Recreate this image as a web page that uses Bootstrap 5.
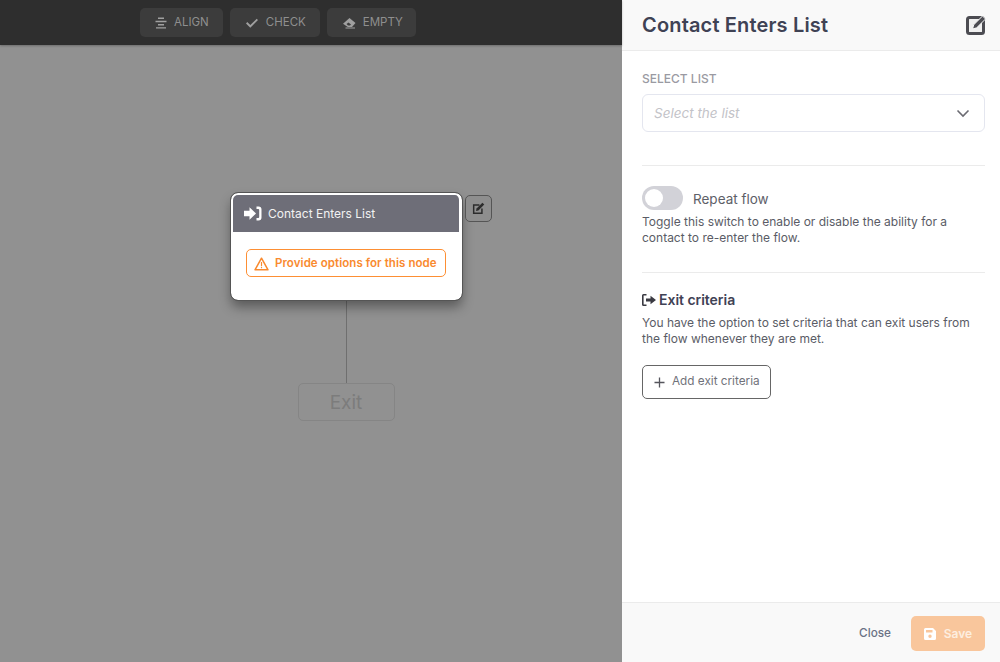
<!DOCTYPE html>
<html lang="en">
<head>
<meta charset="utf-8">
<title>Flow editor</title>
<link href="https://cdn.jsdelivr.net/npm/bootstrap@5.3.0/dist/css/bootstrap.min.css" rel="stylesheet">
<style>
html,body{height:100%;margin:0;overflow:hidden}
body{font-family:Inter,"Liberation Sans",sans-serif;background:#919191;color:#3f4254}
.shell{width:1000px;height:662px}
.stage{width:622px;height:662px;position:relative;background:#919191}
.topbar{height:45px;background:#2e2e2e;padding:8px 0 0 140px;gap:7px;box-shadow:0 1px 2px rgba(0,0,0,.25)}
.tool{height:29px;padding:0 14px 0 15px;gap:7px;background:#3c3c3c;border-radius:5px;color:#8f8f8f;font-size:11.5px}
.tool svg{width:12px;height:12px;fill:#a0a0a0;flex:none}
.tool svg.wideicon{width:14px}
.tool.narrowend{padding-right:13px}
.flownode{position:absolute;left:231px;top:193px;width:231px;height:107px;background:#fff;border:2px solid #fff;border-right-width:3px;outline:1px solid #555;border-radius:7px;box-shadow:0 7px 12px rgba(0,0,0,.38);overflow:hidden}
.nodehead{height:37px;background:#6e6e78;color:#f2f2f2;font-size:12px;font-weight:400;padding-left:11px;gap:6px}
.nodehead svg{width:18px;height:15px;fill:#fff}
.warnbox{margin:17px 13px 0 13px;height:28px;padding-top:1px;border:1px solid #fd8f34;border-radius:5px;color:#f98a2f;font-size:11.5px;font-weight:600;letter-spacing:.07px;padding-left:7px;gap:6px;white-space:nowrap}
.warnbox svg{width:15px;height:14px;flex:none}
.nodeedit{position:absolute;left:465px;top:195px;width:27px;height:27px;border:1px solid #555;border-radius:5px;background:#8e8e8e}
.nodeedit svg{width:13px;height:13px;fill:#2c2c2c}
.wire{position:absolute;left:346px;top:300px;width:1px;height:83px;background:#6f6f6f}
.exitnode{position:absolute;left:298px;top:383px;width:97px;height:38px;padding:2px 1px 0 0;border:1px solid #858585;border-radius:5px;color:#7c7c7c;font-size:19px}
.sidepanel{width:378px;height:662px;background:#fff}
.panelhead{height:51px;background:#f9f9f9;border-bottom:1px solid #ebebeb;padding:0 14px 0 20px}
.panelhead h1{font-size:20px;font-weight:600;letter-spacing:.16px;margin:0;color:#3f4254;line-height:1}
.panelhead svg{width:20px;height:20px}
.panelbody{padding:21px 15px 0 20px}
.fieldlabel{font-size:12px;font-weight:500;color:#9a9aa2;line-height:14px;margin-bottom:8px}
.fakeselect{height:38px;border:1px solid #e4e6ef;border-radius:6px;padding:0 14px 0 11px;font-size:13.5px;font-style:italic;color:#c3c3c8}
.fakeselect svg{width:14px;height:9px}
.rule{height:1px;background:#ebebeb}
.ruleone{margin-top:33px}
.ruletwo{margin-top:26px}
.switchpill{width:41px;height:24px;border-radius:12px;background:#d2d2d8;position:relative;flex:none}
.switchpill::after{content:"";position:absolute;left:3px;top:3px;width:18px;height:18px;border-radius:50%;background:#fff}
.switchrow{gap:10px;font-size:13.5px;color:#5e6068;height:24px;margin-top:20px}
.switchrow span:last-child{padding-top:2px}
.helptext{font-size:12px;line-height:16px;color:#5a5c66;margin:4px 0 0}
.exithead{font-size:14px;font-weight:600;letter-spacing:-.03px;color:#3f4254;line-height:17px;margin-top:18px;gap:3px}
.exithead svg{width:14px;height:12px;fill:#3a3a42}
.exithead + .helptext{margin-top:7px}
.addbtn{height:34px;width:129px;border:1px solid #666;border-radius:5px;background:#fff;color:#70727a;font-size:11.75px;gap:7px;margin-top:18px;padding:0 0 0 11px}
.addbtn svg{width:11px;height:11px}
.panelfoot{height:60px;background:#f9f9f9;border-top:1px solid #ebebeb;padding:2px 15px 0 0;gap:20px}
.closelink{font-size:11.75px;font-weight:500;color:#6b7285}
.savebtn{width:74px;height:35px;background:#f9c69c;border:0;border-radius:5px;color:#fdeee0;font-size:12px;font-weight:600;gap:8px}
.savebtn svg{width:12px;height:12px;fill:#fff}
</style>
</head>
<body>
<div class="shell d-flex">
  <main class="stage">
    <div class="topbar d-flex align-items-start">
      <div class="tool d-flex align-items-center">
        <svg viewBox="0 0 12 12"><path d="M3 .6h6V2H3zM.5 3.800h11v1.400H.5zM3 7h6v1.400H3zM1 10.200h10v1.400H1z"/></svg>ALIGN</div>
      <div class="tool d-flex align-items-center">
        <svg class="wideicon" viewBox="0 0 14 12"><path d="M1 6.400l1.300-1.300 3 3L11.700 1.700 13 3 5.300 10.700z"/></svg>CHECK</div>
      <div class="tool narrowend d-flex align-items-center">
        <svg class="wideicon" viewBox="0 0 14 12"><path d="M7.500 1L13.500 6 10 10H5.800L1 6.800z"/><path d="M4.500 7l2-1.500 2.500 2-1 1H6z" fill="#3c3c3c"/><path d="M3.500 10.500h9.500v1H3.500z"/></svg>EMPTY</div>
    </div>
    <div class="wire"></div>
    <section class="flownode">
      <div class="nodehead d-flex align-items-center">
        <svg viewBox="0 0 18 15"><path d="M0 4.800h5.500V1.200L12 7.500 5.500 13.800V10.200H0z"/><path d="M12.500 .5h2a3 3 0 0 1 3 3v8a3 3 0 0 1-3 3h-2v-2.500h1.800a.9.9 0 0 0 .9-.9V3.900a.9.9 0 0 0-.9-.9h-1.800z"/></svg>
        <span>Contact Enters List</span>
      </div>
      <div class="warnbox d-flex align-items-center">
        <svg viewBox="0 0 15 14"><path d="M7.500 1.200L14 12.800H1z" fill="none" stroke="#f98a2f" stroke-width="1.500" stroke-linejoin="round"/><path d="M6.900 5h1.200v4.200H6.900zM6.900 10h1.200v1.300H6.900z" fill="#f98a2f"/></svg>
        <span>Provide options for this node</span>
      </div>
    </section>
    <div class="nodeedit d-flex align-items-center justify-content-center">
      <svg viewBox="0 0 14 14"><path d="M1 2.500h7v1.600H2.600v7.300h7.300V7h1.600v6H1z"/><path d="M11.200.8l2 2-6.300 6.300-2.600.6.600-2.600z"/></svg>
    </div>
    <div class="exitnode d-flex align-items-center justify-content-center">Exit</div>
  </main>
  <aside class="sidepanel d-flex flex-column">
    <header class="panelhead d-flex align-items-center justify-content-between">
      <h1>Contact Enters List</h1>
      <svg viewBox="0 0 20 20"><rect x="1.500" y="2.500" width="16" height="16" rx="2" fill="#f0f0f0" stroke="#4c4c52" stroke-width="3"/><path d="M16.500 1l3 3-8.800 8.800-4.200 1.200 1.200-4.200z" fill="#4c4c52" stroke="#f9f9f9" stroke-width="1"/></svg>
    </header>
    <div class="panelbody flex-grow-1">
      <div class="fieldlabel">SELECT LIST</div>
      <div class="fakeselect d-flex align-items-center justify-content-between">
        <span>Select the list</span>
        <svg viewBox="0 0 14 9"><path d="M1.500 1.500L7 7l5.500-5.500" fill="none" stroke="#6b6b72" stroke-width="1.600"/></svg>
      </div>
      <div class="rule ruleone"></div>
      <div class="switchrow d-flex align-items-center"><span class="switchpill"></span><span>Repeat flow</span></div>
      <p class="helptext">Toggle this switch to enable or disable the ability for a contact to re-enter the flow.</p>
      <div class="rule ruletwo"></div>
      <div class="exithead d-flex align-items-center">
        <svg viewBox="0 0 14 12"><path d="M4.500 0H1.500A1.500 1.500 0 0 0 0 1.500v9A1.500 1.500 0 0 0 1.500 12h3v-1.500H1.600v-9h2.900z"/><path d="M4 4.500h4.500V1.800L14 6l-5.500 4.200V7.500H4z"/></svg>
        <span>Exit criteria</span>
      </div>
      <p class="helptext">You have the option to set criteria that can exit users from the flow whenever they are met.</p>
      <button type="button" class="addbtn d-flex align-items-center">
        <svg viewBox="0 0 11 11"><path d="M5.500 .5v10M.5 5.500h10" stroke="#55555c" stroke-width="1.300" fill="none"/></svg>
        <span>Add exit criteria</span>
      </button>
    </div>
    <footer class="panelfoot d-flex align-items-center justify-content-end">
      <span class="closelink">Close</span>
      <button type="button" class="savebtn d-flex align-items-center justify-content-center">
        <svg viewBox="0 0 12 12"><path d="M1.500 0H9l3 3v7.500A1.500 1.500 0 0 1 10.500 12h-9A1.500 1.500 0 0 1 0 10.500v-9A1.500 1.500 0 0 1 1.500 0zM2 2v2.500h6.500V2zM6 6.500a1.700 1.700 0 1 0 0 3.400 1.700 1.700 0 0 0 0-3.400z" fill-rule="evenodd"/></svg>
        <span>Save</span>
      </button>
    </footer>
  </aside>
</div>
<script src="https://cdn.jsdelivr.net/npm/bootstrap@5.3.0/dist/js/bootstrap.bundle.min.js"></script>
</body>
</html>
